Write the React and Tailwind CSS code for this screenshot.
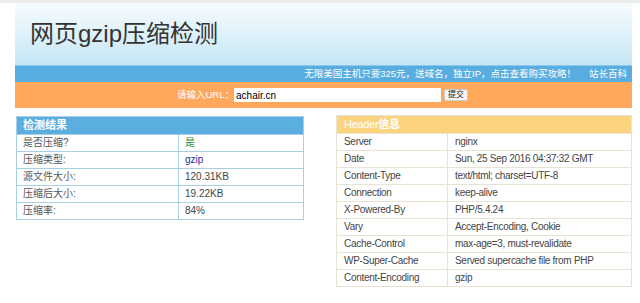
const cjk = "font-['Liberation_Sans','Noto_Sans_CJK_SC',sans-serif]";

const resultRows = [
  { label: "是否压缩?", value: "是", tone: "text-[#2e8b2e]" },
  { label: "压缩类型:", value: "gzip", tone: "text-[#2a2a9a]" },
  { label: "源文件大小:", value: "120.31KB", tone: "text-[#444]" },
  { label: "压缩后大小:", value: "19.22KB", tone: "text-[#444]" },
  { label: "压缩率:", value: "84%", tone: "text-[#444]" },
];

const headerRows = [
  ["Server", "nginx"],
  ["Date", "Sun, 25 Sep 2016 04:37:32 GMT"],
  ["Content-Type", "text/html; charset=UTF-8"],
  ["Connection", "keep-alive"],
  ["X-Powered-By", "PHP/5.4.24"],
  ["Vary", "Accept-Encoding, Cookie"],
  ["Cache-Control", "max-age=3, must-revalidate"],
  ["WP-Super-Cache", "Served supercache file from PHP"],
  ["Content-Encoding", "gzip"],
];

function ResultTable() {
  return (
    <table className={`w-[288px] border-collapse border border-[#a9cfe4] text-[10px] ${cjk}`}>
      <thead>
        <tr>
          <th
            colSpan={2}
            className="h-[17px] bg-[#5aaee0] px-[6px] text-left text-[11px] font-bold text-white"
          >
            检测结果
          </th>
        </tr>
      </thead>
      <tbody>
        {resultRows.map((row) => (
          <tr key={row.label} className="h-[17px]">
            <td className="w-[162px] border border-[#a9cfe4] px-[6px] py-0 text-[#555]">
              {row.label}
            </td>
            <td className={`border border-[#a9cfe4] px-[6px] py-0 ${row.tone}`}>
              {row.value}
            </td>
          </tr>
        ))}
      </tbody>
    </table>
  );
}

function HeaderTable() {
  return (
    <table
      className={`w-[296px] border-collapse border border-[#e8e2d2] text-[10px] tracking-[-0.3px] ${cjk}`}
    >
      <thead>
        <tr>
          <th
            colSpan={2}
            className="h-[17px] bg-[#fcd480] px-[7px] text-left text-[11px] font-normal text-white"
          >
            Header<span className="font-bold">信息</span>
          </th>
        </tr>
      </thead>
      <tbody>
        {headerRows.map(([key, val]) => (
          <tr key={key} className="h-[17px]">
            <td className="w-[111px] border border-[#e8e2d2] px-[7px] py-0 text-[#444]">
              {key}
            </td>
            <td className="border border-[#e8e2d2] px-[7px] py-0 text-[#444]">{val}</td>
          </tr>
        ))}
      </tbody>
    </table>
  );
}

export default function App() {
  return (
    <div className={`h-[303px] w-[640px] overflow-hidden bg-white ${cjk}`}>
      <div className="h-[3px] bg-[#ececec]" />
      <div className="ml-[15px] w-[617px]">
        <div className="flex h-[62px] items-center bg-gradient-to-b from-[#f6fcfe] to-[#c6e6f5] pl-[15px]">
          <h1 className="text-[24px] font-normal leading-none text-[#333]">
            网页gzip压缩检测
          </h1>
        </div>
        <div className="flex h-[17px] items-center justify-end gap-[13px] border-t border-[#8cc8ec] bg-[#58ade0] pr-[5px] text-[9.5px] text-white">
          <span>无限美国主机只要325元，送域名，独立IP，点击查看购买攻略！</span>
          <span>站长百科</span>
        </div>
        <div className="flex h-[26px] items-center bg-[#ffa85c] pl-[162px]">
          <span className="text-[9.5px] text-white">请输入URL：</span>
          <input
            defaultValue="achair.cn"
            className="h-[14px] w-[207px] bg-white px-[2px] text-[10px] text-black outline-none"
          />
          <button className="ml-[3px] h-[12px] w-[24px] rounded-[2px] border border-[#ccc] bg-[#f4f4f4] text-[8px] leading-none text-[#222]">
            提交
          </button>
        </div>
      </div>
      <div className="mt-[7px] flex items-start">
        <div className="ml-[16px] mt-[1px]">
          <ResultTable />
        </div>
        <div className="ml-[32px]">
          <HeaderTable />
        </div>
      </div>
    </div>
  );
}
